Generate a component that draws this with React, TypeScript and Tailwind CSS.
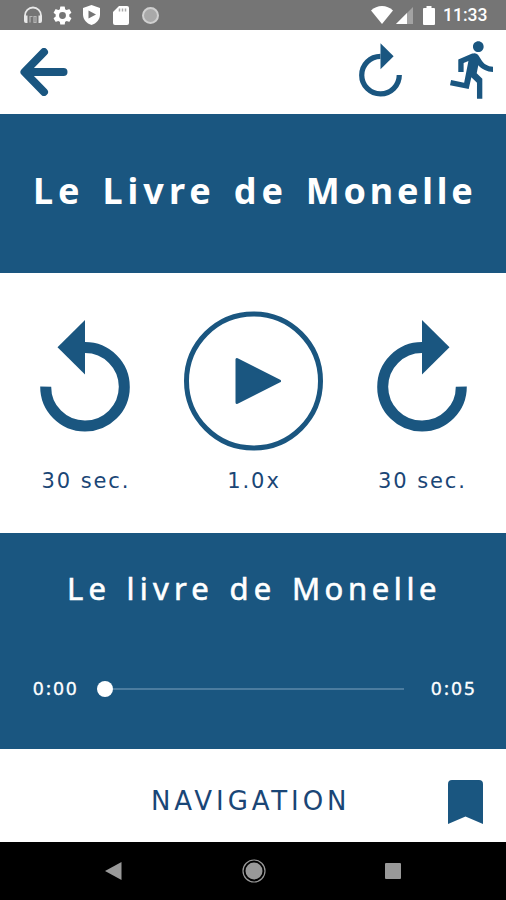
import { useState } from "react";

function StatusBar() {
  return (
    <div className="flex h-[30px] items-center bg-[#757575] pr-[18px] pl-[23px] text-white">
      <svg width="20" height="18" viewBox="0 0 20 18" fill="none">
        <path d="M2 12V9.5a8 8 0 0 1 16 0V12" stroke="#e8e8e8" strokeWidth="1.8" />
        <path d="M1 9.5h3.5V17H3a2 2 0 0 1-2-2zM19 9.5h-3.5V17H17a2 2 0 0 0 2-2z" fill="#e8e8e8" />
        <path d="M7 16.5v-6h2.5M11 16.5v-6h2v6z" stroke="#b5b5b5" strokeWidth="1.2" />
      </svg>
      <svg className="ml-[10px]" width="19" height="19" viewBox="2 2 20 20" fill="#fff">
        <path d="M19.14 12.94c.04-.3.06-.61.06-.94s-.02-.64-.07-.94l2.03-1.58a.49.49 0 0 0 .12-.61l-1.92-3.32a.49.49 0 0 0-.59-.22l-2.39.96c-.5-.38-1.03-.7-1.62-.94l-.36-2.54a.48.48 0 0 0-.48-.41h-3.84a.48.48 0 0 0-.47.41l-.36 2.54c-.59.24-1.13.57-1.62.94l-2.39-.96a.48.48 0 0 0-.59.22L2.74 8.87c-.12.21-.08.47.12.61l2.03 1.58c-.05.3-.09.63-.09.94s.02.64.07.94l-2.03 1.58a.49.49 0 0 0-.12.61l1.92 3.32c.12.22.37.29.59.22l2.39-.96c.5.38 1.03.7 1.62.94l.36 2.54c.05.24.24.41.48.41h3.84c.24 0 .44-.17.47-.41l.36-2.54c.59-.24 1.13-.56 1.62-.94l2.39.96c.22.08.47 0 .59-.22l1.92-3.32a.48.48 0 0 0-.12-.61zM12 15.6A3.6 3.6 0 1 1 12 8.4a3.6 3.6 0 0 1 0 7.2z" />
      </svg>
      <svg className="ml-[11px]" width="17" height="20" viewBox="0 0 17 20">
        <path d="M8.5 0 17 3v6.5c0 5-3.5 9-8.5 10.5C3.5 18.5 0 14.5 0 9.5V3z" fill="#fff" />
        <path d="M5.5 5.5 13 9.5l-7.5 4z" fill="#757575" />
      </svg>
      <svg className="ml-[13px]" width="16" height="19" viewBox="0 0 16 19">
        <path d="M6 0h8a2 2 0 0 1 2 2v15a2 2 0 0 1-2 2H2a2 2 0 0 1-2-2V6z" fill="#fff" />
        <path d="M6.5 2.5v3M9.5 2.5v3M12.5 2.5v3" stroke="#aaa" strokeWidth="1.5" />
      </svg>
      <div className="ml-[13px] size-[17px] rounded-full border-2 border-[#d0d0d0] bg-[#a9a9a9]" />
      <svg className="ml-auto" width="22" height="18" viewBox="0 0 22 18" fill="#fff">
        <path d="M0 4.5C6-1.5 16-1.5 22 4.5L11 18z" />
      </svg>
      <svg className="ml-[3px]" width="17" height="17" viewBox="0 0 17 17">
        <path d="M17 0v17H0z" fill="#a3a3a3" />
        <path d="M11 6v11H0z" fill="#fff" />
      </svg>
      <svg className="ml-[10px]" width="12" height="19" viewBox="0 0 12 19" fill="#fff">
        <path d="M3.5 0h5v2H11a1 1 0 0 1 1 1v15a1 1 0 0 1-1 1H1a1 1 0 0 1-1-1V3a1 1 0 0 1 1-1h2.5z" />
      </svg>
      <span className="mt-[2px] ml-[8px] w-[45px] font-[Roboto,sans-serif] text-[17.5px] leading-none font-medium whitespace-nowrap">
        11:33
      </span>
    </div>
  );
}

function TurnIcon({ className }: { className?: string }) {
  return (
    <svg className={className} viewBox="0 0 90 112" fill="#1a5680">
      <path d="M45 27.5A39.3 39.3 0 1 0 84.3 66.6" fill="none" stroke="#1a5680" strokeWidth="11" />
      <path d="M45 0 72.5 27.3 45 54.6z" />
    </svg>
  );
}

function Header() {
  return (
    <header className="flex h-[84px] items-start pr-[13px] pl-5">
      <button className="mt-[18px]">
        <svg width="48" height="48" viewBox="0 0 48 48" fill="none" stroke="#1a5680" strokeWidth="8" strokeLinecap="round" strokeLinejoin="round">
          <path d="M24 4 4.5 24 24 44M5 24h38.5" />
        </svg>
      </button>
      <button className="mt-[13px] ml-auto">
        <TurnIcon className="h-[54px] w-[43px]" />
      </button>
      <button className="mt-[11px] ml-[48px]">
        <svg width="43" height="58" viewBox="2.89 1.48 16.1 21.5" fill="#1a5680">
          <path d="M13.49 5.48c1.1 0 2-.9 2-2s-.9-2-2-2-2 .9-2 2 .9 2 2 2zm-3.6 13.9l1-4.4 2.1 2v6h2v-7.5l-2.1-2 .6-3c1.3 1.5 3.3 2.5 5.5 2.5v-2c-1.9 0-3.5-1-4.3-2.4l-1-1.6c-.4-.6-1-1-1.7-1-.3 0-.5.1-.8.1l-5.2 2.2v4.7h2v-3.4l1.8-.7-1.6 8.1-4.9-1-.4 2 7 1.4z" />
        </svg>
      </button>
    </header>
  );
}

function Controls({ playing, onToggle }: { playing: boolean; onToggle: () => void }) {
  return (
    <section className="h-[260px] text-[#1a4676]">
      <div className="flex h-[196px] items-start justify-between pr-[39px] pl-[40px]">
        <button className="mt-[47px]">
          <TurnIcon className="h-[112px] w-[90px] -scale-x-100" />
        </button>
        <button className="mt-[38px]" onClick={onToggle}>
          <svg width="140" height="140" viewBox="0 0 140 140">
            <circle cx="69.5" cy="70" r="67" fill="none" stroke="#1a5680" strokeWidth="5" />
            {playing ? (
              <path d="M52 48h12v44H52zM76 48h12v44H76z" fill="#1a5680" />
            ) : (
              <path d="M53 48.5v43L95.5 70z" fill="#1a5680" stroke="#1a5680" strokeWidth="3" strokeLinejoin="round" />
            )}
          </svg>
        </button>
        <button className="mt-[47px]">
          <TurnIcon className="h-[112px] w-[90px]" />
        </button>
      </div>
      <div className="grid grid-cols-3 pl-[2px] text-center font-['DejaVu_Sans',sans-serif] text-[21px] leading-6 tracking-[1.9px]">
        <span>30 sec.</span>
        <span>1.0x</span>
        <span className="pl-px">30 sec.</span>
      </div>
    </section>
  );
}

function Chapter() {
  return (
    <section className="h-[216px] bg-[#1a5680] text-white">
      <h2 className="h-[144px] pt-[34px] pl-[67px] text-[31px] leading-[42px] tracking-[5.2px] whitespace-nowrap [-webkit-text-stroke:0.6px_white] [word-spacing:2.2px]">
        Le livre de <span className="tracking-[4.6px]">Monelle</span>
      </h2>
      <div className="flex h-[24px] items-center pr-[29px] pl-[33px] text-[18.5px] leading-none tracking-[2.3px] [-webkit-text-stroke:0.4px_white]">
        <span className="mb-[2px] w-[64px]">0:00</span>
        <div className="flex w-[307px] items-center">
          <div className="size-4 rounded-full bg-white" />
          <div className="h-[2px] flex-1 bg-[#4c7c9f]" />
        </div>
        <span className="mb-[2px] ml-auto">0:05</span>
      </div>
    </section>
  );
}

function SystemBar() {
  return (
    <div className="flex h-[58px] items-center justify-between bg-black pr-[105px] pl-[105px]">
      <svg width="17" height="18" viewBox="0 0 17 18" fill="#999">
        <path d="M16.5 0v18L0 9z" />
      </svg>
      <svg width="24" height="24" viewBox="0 0 24 24" fill="#999">
        <circle cx="12" cy="12" r="8.5" />
        <circle cx="12" cy="12" r="11" fill="none" stroke="#999" strokeWidth="1.2" />
      </svg>
      <div className="size-4 rounded-[1px] bg-[#999]" />
    </div>
  );
}

export default function App() {
  const [playing, setPlaying] = useState(false);

  return (
    <div className="flex h-[900px] w-[506px] flex-col overflow-hidden bg-white font-['Noto_Sans',sans-serif]">
      <StatusBar />
      <Header />
      <h1 className="h-[159px] bg-[#1a5680] pt-[53px] pl-[33px] text-[36px] leading-[48px] font-bold tracking-[5px] whitespace-nowrap text-white [word-spacing:3.5px]">
        Le Livre de <span className="tracking-[3.8px]">Monelle</span>
      </h1>
      <Controls playing={playing} onToggle={() => setPlaying(!playing)} />
      <Chapter />
      <footer className="flex h-[93px] items-start pr-[23px] pl-[151px]">
        <span className="mt-[36px] font-['DejaVu_Sans',sans-serif] text-[26px] leading-8 tracking-[3.9px] text-[#1a4676]">
          NAVIGATION
        </span>
        <svg className="mt-[31px] ml-auto" width="35" height="44" viewBox="0 0 35 44" fill="#1a5680">
          <path d="M4 0h27a4 4 0 0 1 4 4v40l-17.500-7.500L0 44V4a4 4 0 0 1 4-4z" />
        </svg>
      </footer>
      <SystemBar />
    </div>
  );
}
